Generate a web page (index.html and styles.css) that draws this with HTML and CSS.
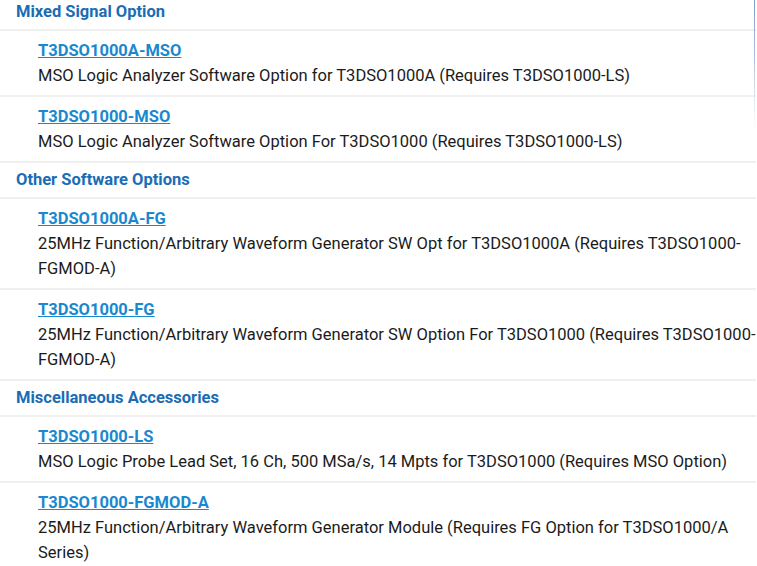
FILE: index.html
```html
<!DOCTYPE html>
<html>
<head>
<meta charset="utf-8">
<link rel="stylesheet" href="styles.css">
</head>
<body>
<div class="panel">
  <div class="list">
    <div class="group-title first">Mixed Signal Option</div>
    <div class="item">
      <a class="code" href="#">T3DSO1000A-MSO</a>
      <div class="desc">MSO Logic Analyzer Software Option for T3DSO1000A (Requires T3DSO1000-LS)</div>
    </div>
    <div class="item">
      <a class="code" href="#">T3DSO1000-MSO</a>
      <div class="desc">MSO Logic Analyzer Software Option For T3DSO1000 (Requires T3DSO1000-LS)</div>
    </div>
    <div class="group-title">Other Software Options</div>
    <div class="item">
      <a class="code" href="#">T3DSO1000A-FG</a>
      <div class="desc">25MHz Function/Arbitrary Waveform Generator SW Opt for T3DSO1000A (Requires T3DSO1000-FGMOD-A)</div>
    </div>
    <div class="item">
      <a class="code" href="#">T3DSO1000-FG</a>
      <div class="desc">25MHz Function/Arbitrary Waveform Generator SW Option For T3DSO1000 (Requires T3DSO1000-FGMOD-A)</div>
    </div>
    <div class="group-title">Miscellaneous Accessories</div>
    <div class="item">
      <a class="code" href="#">T3DSO1000-LS</a>
      <div class="desc">MSO Logic Probe Lead Set, 16 Ch, 500 MSa/s, 14 Mpts for T3DSO1000 (Requires MSO Option)</div>
    </div>
    <div class="item">
      <a class="code" href="#">T3DSO1000-FGMOD-A</a>
      <div class="desc">25MHz Function/Arbitrary Waveform Generator Module (Requires FG Option for T3DSO1000/A Series)</div>
    </div>
  </div>
  <div class="edge"></div>
</div>
</body>
</html>
```
FILE: styles.css
```css
html, body {
  margin: 0;
  padding: 0;
  background: #ffffff;
  overflow: hidden;
}
body {
  font-family: Roboto, "Liberation Sans", Arial, sans-serif;
  font-size: 16.5px;
  color: #1b1b1b;
}
.panel {
  position: relative;
  width: 757px;
  height: 566px;
  overflow: hidden;
}
.list {
  width: 756px;
  margin-top: -5px;
}
.group-title {
  font-weight: 700;
  color: #1a6db4;
  line-height: 24px;
  padding: 5px 16px 5px 16px;
  border-top: 2px solid #efefef;
}
.group-title.first {
  border-top: none;
}
.item {
  display: flex;
  flex-direction: column;
  align-items: flex-start;
  padding: 8px 0 7px 38px;
  border-top: 2px solid #efefef;
}
.code {
  display: block;
  font-weight: 700;
  color: #1a88cf;
  text-decoration: underline;
  line-height: 24px;
}
.desc {
  line-height: 25px;
}
.edge {
  position: absolute;
  top: 0;
  left: 754px;
  width: 1px;
  height: 130px;
  background: linear-gradient(to bottom, #7f9cc8 0%, #a9bddc 40%, #e4ebf5 80%, rgba(255,255,255,0) 100%);
}
```
